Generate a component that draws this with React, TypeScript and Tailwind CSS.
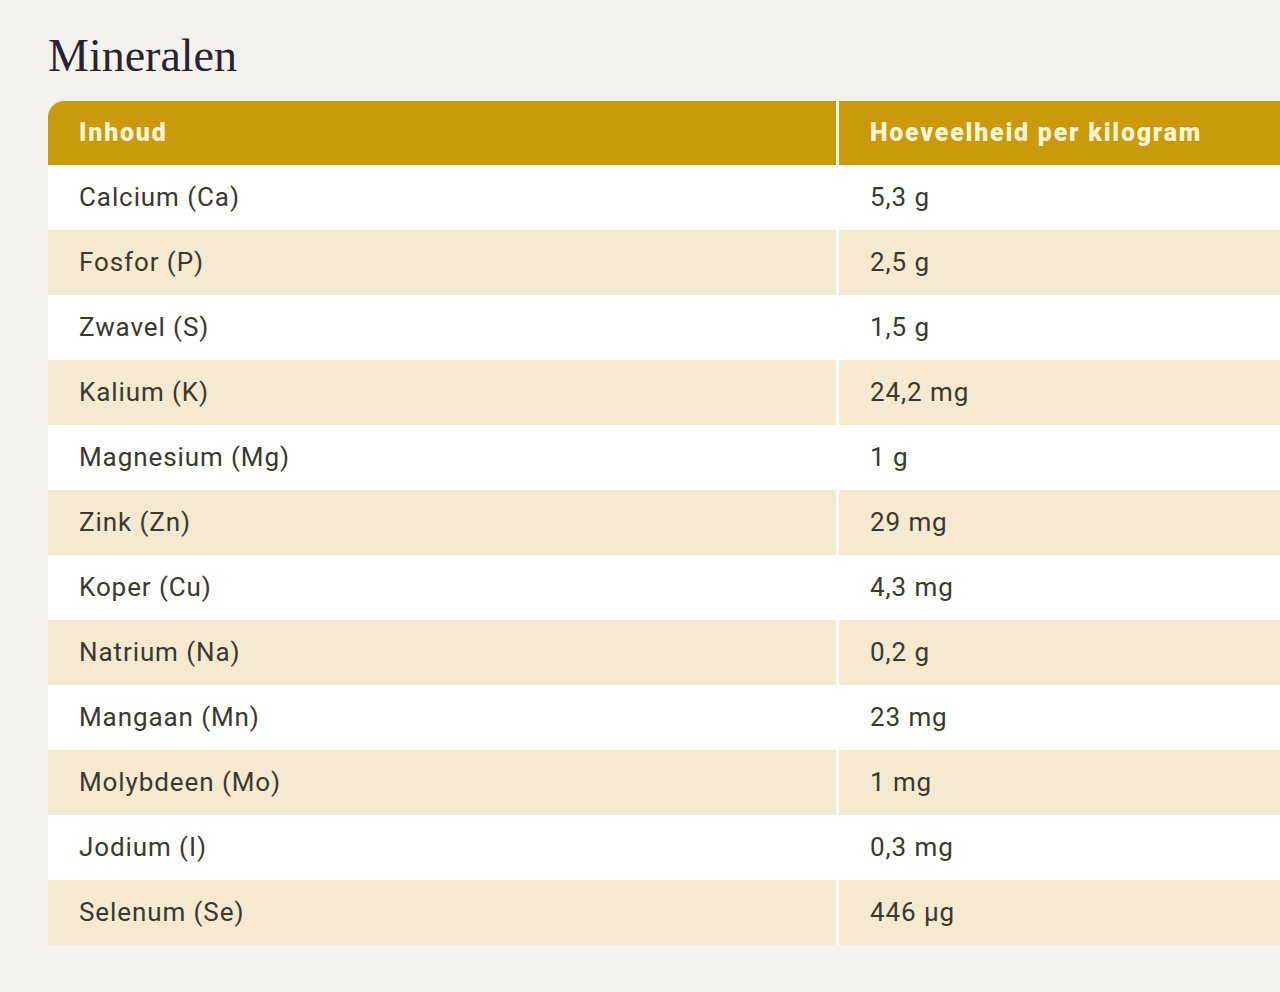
const rows = [
  ['Calcium (Ca)', '5,3 g'],
  ['Fosfor (P)', '2,5 g'],
  ['Zwavel (S)', '1,5 g'],
  ['Kalium (K)', '24,2 mg'],
  ['Magnesium (Mg)', '1 g'],
  ['Zink (Zn)', '29 mg'],
  ['Koper (Cu)', '4,3 mg'],
  ['Natrium (Na)', '0,2 g'],
  ['Mangaan (Mn)', '23 mg'],
  ['Molybdeen (Mo)', '1 mg'],
  ['Jodium (I)', '0,3 mg'],
  ['Selenum (Se)', '446 µg'],
]

export default function App() {
  return (
    <div className="min-h-[992px] w-full overflow-hidden bg-[#f4f2ee] pl-12 pt-[30px]">
      <h2 className="font-['Liberation_Serif',serif] text-[46px] leading-[52px] text-[#2b2230]">Mineralen</h2>

      <div className="mt-[19px] w-[1300px] overflow-hidden rounded-tl-2xl bg-white font-['Roboto',sans-serif]">
        <div className="flex h-16 gap-[3px] bg-[#fbf6e6]">
          <div className="flex w-[788px] items-center bg-[#c99a0b] px-[31px] text-[25px] font-black tracking-[0.07em] text-[#fff5d4]">
            Inhoud
          </div>
          <div className="flex flex-1 items-center bg-[#c99a0b] px-[31px] text-[25px] font-black tracking-[0.07em] text-[#fff5d4]">
            Hoeveelheid per kilogram
          </div>
        </div>

        {rows.map(([name, amount], i) => (
          <div key={name} className="flex h-[65px] gap-[3px] bg-white">
            <div
              className={`flex w-[788px] items-center px-[31px] text-[26px] tracking-[0.035em] text-[#3a392f] ${
                i % 2 === 1 ? 'bg-[#f5e9cf]' : 'bg-white'
              }`}
            >
              {name}
            </div>
            <div
              className={`flex flex-1 items-center px-[31px] text-[26px] tracking-[0.035em] text-[#3a392f] ${
                i % 2 === 1 ? 'bg-[#f5e9cf]' : 'bg-white'
              }`}
            >
              {amount}
            </div>
          </div>
        ))}
      </div>
    </div>
  )
}
